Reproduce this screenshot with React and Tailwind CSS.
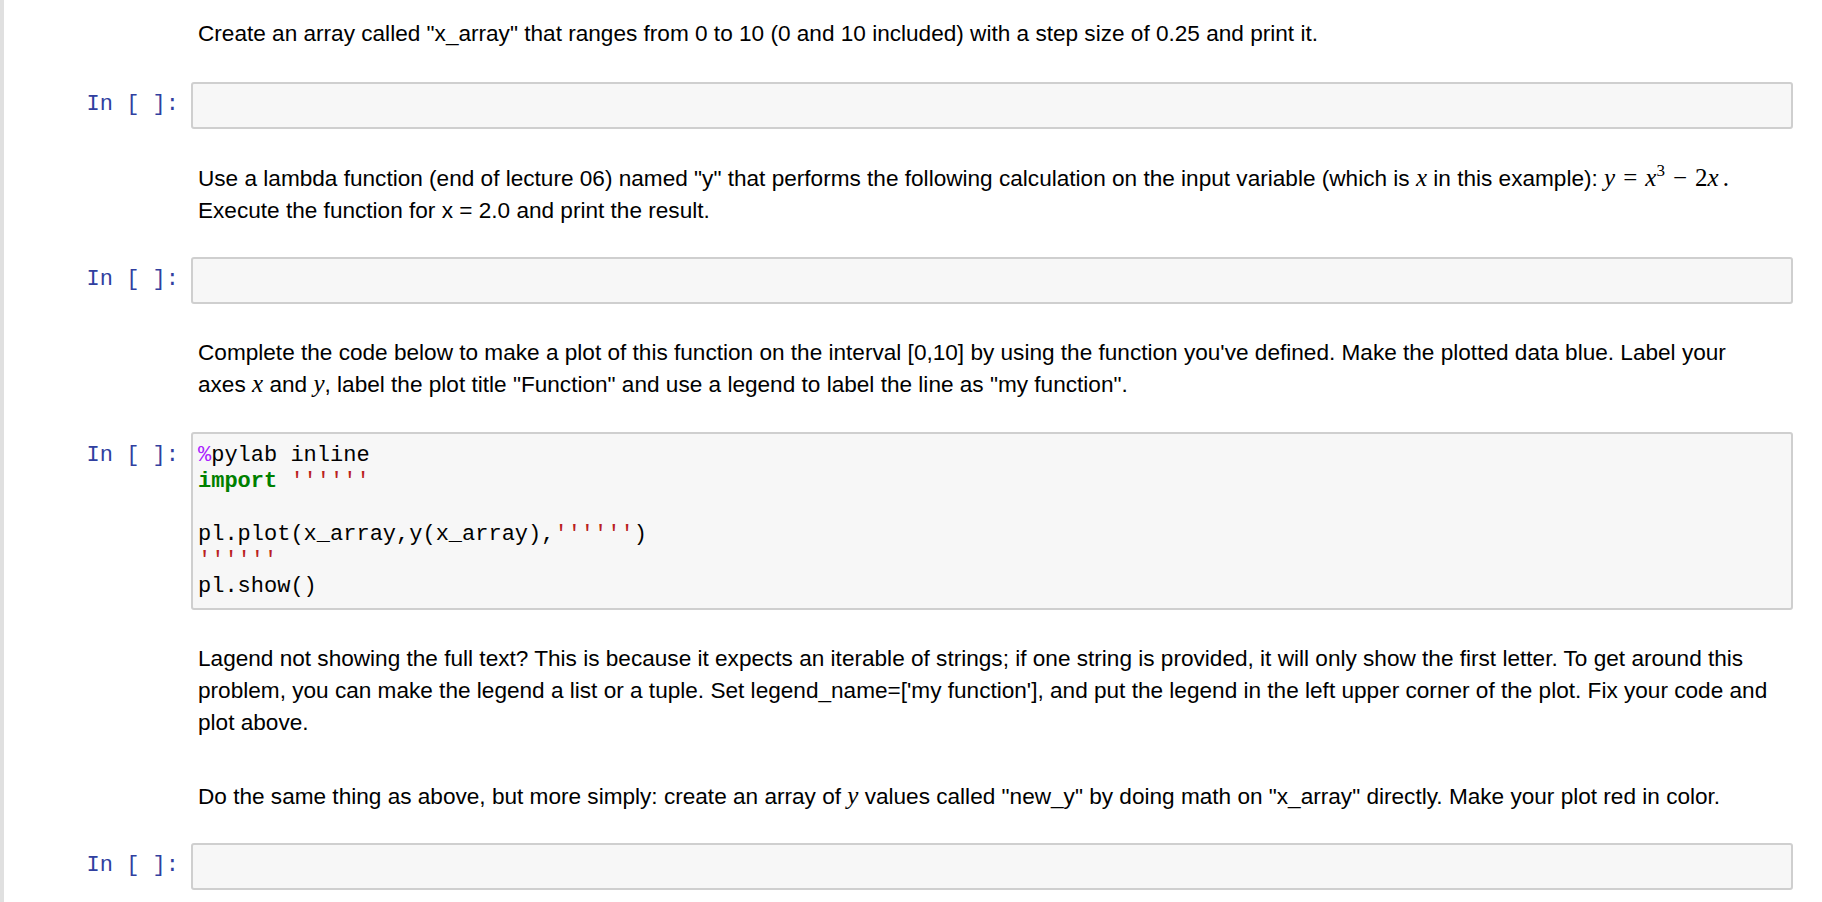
import React from "react";

const SANS = "font-['Liberation_Sans',Arial,sans-serif]";
const MONO = "font-['Liberation_Mono','DejaVu_Sans_Mono',monospace]";
const SERIF = "font-['Liberation_Serif','DejaVu_Serif',serif]";

function M({ children }) {
  return (
    <span className={`${SERIF} italic text-[25px] leading-[0]`}>{children}</span>
  );
}

function MdRow({ className = "", children }) {
  return (
    <div className={`flex ${className}`}>
      <div className="w-[187px] shrink-0" />
      <div className="flex-1 pl-[7px] whitespace-nowrap">{children}</div>
    </div>
  );
}

function Prompt({ className = "" }) {
  return (
    <div
      className={`w-[187px] shrink-0 pr-[12px] text-right text-[#303F9F] ${MONO} text-[22px] leading-[26px] ${className}`}
    >
      In [ ]:
    </div>
  );
}

function EmptyCell({ className = "" }) {
  return (
    <div className={`flex ${className}`}>
      <Prompt className="pt-[10px]" />
      <div className="flex-1 h-[47px] rounded-[3px] border-2 border-[#cfcfcf] bg-[#f7f7f7]" />
    </div>
  );
}

function CodeCell({ className = "" }) {
  const str = "text-[#BA2121]";
  return (
    <div className={`flex ${className}`}>
      <Prompt className="pt-[11px]" />
      <div
        className={`flex-1 rounded-[3px] border-2 border-[#cfcfcf] bg-[#f7f7f7] px-[5px] pt-[9px] pb-[7px] ${MONO} text-[22px] leading-[26.3px] text-black whitespace-pre`}
      >
        <div>
          <span className="text-[#AA22FF]">%</span>pylab inline
        </div>
        <div>
          <span className="font-bold text-[#008000]">import</span>{" "}
          <span className={str}>''''''</span>
        </div>
        <div>&nbsp;</div>
        <div>
          pl.plot(x_array,y(x_array),<span className={str}>''''''</span>)
        </div>
        <div>
          <span className={str}>''''''</span>
        </div>
        <div>pl.show()</div>
      </div>
    </div>
  );
}

export default function App() {
  return (
    <div className="flex min-h-screen bg-white">
      <div className="w-[4px] shrink-0 bg-[#e0e0e0]" />
      <div
        className={`flex-1 pr-[29px] pt-[18px] pb-[13px] text-black ${SANS} text-[22.6px] leading-[32px]`}
      >
        <MdRow>
          Create an array called "x_array" that ranges from 0 to 10 (0 and 10
          included) with a step size of 0.25 and print it.
        </MdRow>

        <EmptyCell className="mt-[32px]" />

        <MdRow className="mt-[34px]">
          <div>
            Use a lambda function (end of lecture 06) named "y" that performs
            the following calculation on the input variable (which is{" "}
            <M>x</M> in this example):{" "}
            <span className={`${SERIF} text-[25px] leading-[0]`}>
              <i>y</i>
              <span className="mx-[8px]">=</span>
              <i>x</i>
              <span className="relative -top-[10px] text-[17px]">3</span>
              <span className="mx-[8px]">−</span>2<i>x</i>
              <span className="ml-[4px]">.</span>
            </span>
          </div>
          <div>Execute the function for x = 2.0 and print the result.</div>
        </MdRow>

        <EmptyCell className="mt-[30px]" />

        <MdRow className="mt-[33px]">
          <div>
            Complete the code below to make a plot of this function on the
            interval [0,10] by using the function you've defined. Make the
            plotted data blue. Label your
          </div>
          <div>
            axes <M>x</M> and <M>y</M>, label the plot title "Function" and use
            a legend to label the line as "my function".
          </div>
        </MdRow>

        <CodeCell className="mt-[31px]" />

        <MdRow className="mt-[33px]">
          <div>
            Lagend not showing the full text? This is because it expects an
            iterable of strings; if one string is provided, it will only show
            the first letter. To get around this
          </div>
          <div>
            problem, you can make the legend a list or a tuple. Set
            legend_name=['my function'], and put the legend in the left upper
            corner of the plot. Fix your code and
          </div>
          <div>plot above.</div>
        </MdRow>

        <MdRow className="mt-[42px]">
          Do the same thing as above, but more simply: create an array of{" "}
          <M>y</M> values called "new_y" by doing math on "x_array" directly.
          Make your plot red in color.
        </MdRow>

        <EmptyCell className="mt-[30px]" />
      </div>
    </div>
  );
}
